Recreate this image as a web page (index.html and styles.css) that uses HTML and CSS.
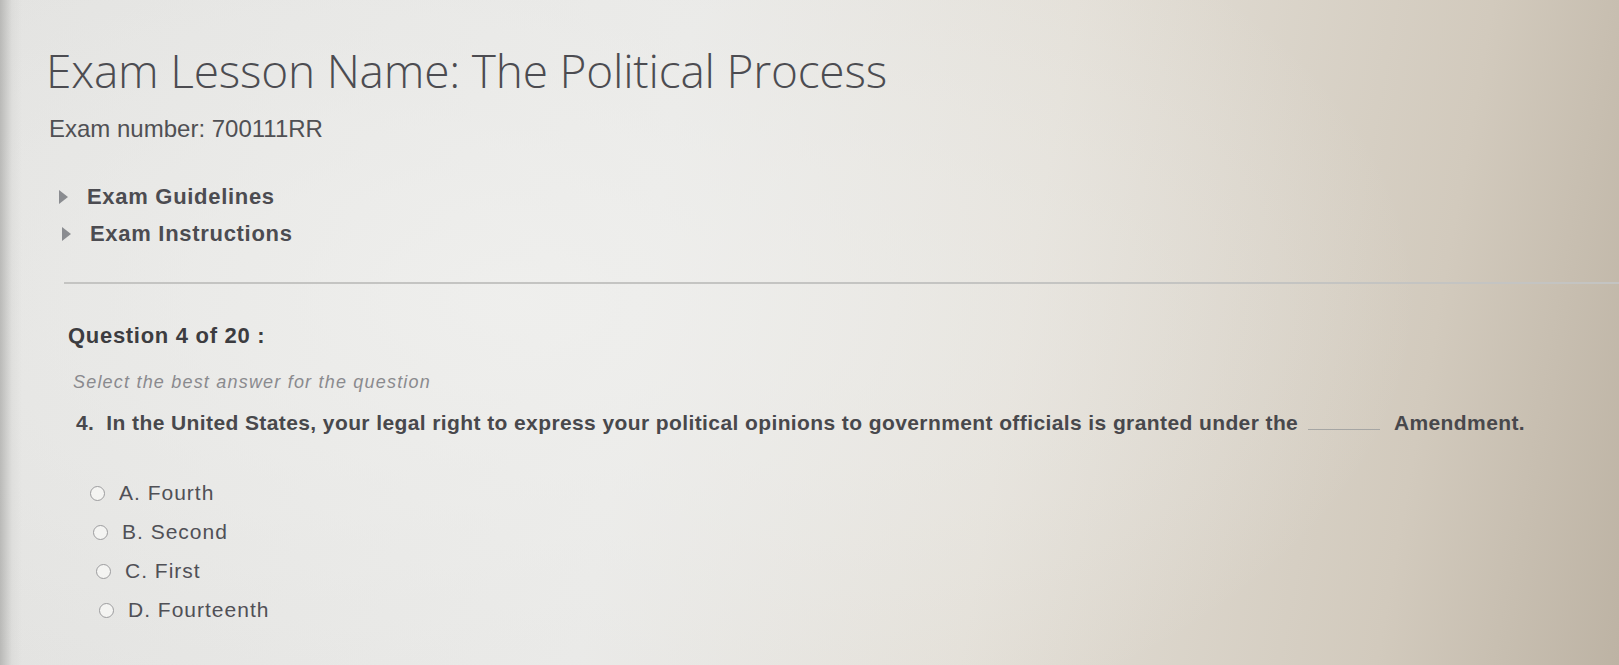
FILE: index.html
```html
<!DOCTYPE html>
<html lang="en">
<head>
<meta charset="utf-8">
<title>Exam Lesson Name: The Political Process</title>
<link rel="stylesheet" href="styles.css">
</head>
<body>
<div class="screen">
  <main class="page">
    <h1 class="title">Exam Lesson Name: The Political Process</h1>
    <p class="exam-number">Exam number: 700111RR</p>
    <ul class="toggles">
      <li class="toggle"><span class="tri"></span>Exam Guidelines</li>
      <li class="toggle toggle-2"><span class="tri"></span>Exam Instructions</li>
    </ul>
    <hr class="divider">
    <section class="question">
      <h2 class="q-head">Question 4 of 20 :</h2>
      <p class="hint">Select the best answer for the question</p>
      <p class="q-text"><span class="q-num">4.</span>In the United States, your legal right to express your political opinions to government officials is granted under the <span class="blank"></span> Amendment.</p>
      <ul class="options">
        <li class="opt opt-a"><span class="radio"></span>A. Fourth</li>
        <li class="opt opt-b"><span class="radio"></span>B. Second</li>
        <li class="opt opt-c"><span class="radio"></span>C. First</li>
        <li class="opt opt-d"><span class="radio"></span>D. Fourteenth</li>
      </ul>
    </section>
  </main>
</div>
</body>
</html>
```

FILE: styles.css
```css
html, body {
  margin: 0;
  padding: 0;
  width: 1619px;
  height: 665px;
  overflow: hidden;
}
body {
  font-family: "Liberation Sans", Arial, sans-serif;
  color: #4a4a4c;
}
.screen {
  width: 1619px;
  height: 665px;
  background:
    linear-gradient(90deg, rgba(150,150,148,0.55) 0px, rgba(200,200,198,0.25) 12px, rgba(0,0,0,0) 22px),
    radial-gradient(ellipse 900px 500px at 520px 300px, rgba(240,240,238,0.85), rgba(240,240,238,0) 100%),
    linear-gradient(100deg, #e1e1df 0%, #e8e8e6 40%, #e3dfd7 62%, #d2cabd 86%, #bdb3a4 100%);
  box-sizing: border-box;
  padding: 42px 0 0 46px;
}
.page {
  display: flex;
  flex-direction: column;
}
.title {
  margin: 0;
  font-family: "Open Sans", "Liberation Sans", sans-serif;
  font-weight: 300;
  font-size: 46px;
  line-height: 56px;
  color: #4c4c51;
  letter-spacing: -0.2px;
}
.exam-number {
  margin: 17px 0 0 3px;
  font-size: 24px;
  line-height: 28px;
  color: #505054;
  letter-spacing: 0;
}
.toggles {
  list-style: none;
  margin: 41px 0 0 13px;
  padding: 0;
}
.toggle {
  display: flex;
  align-items: center;
  font-weight: bold;
  font-size: 22px;
  line-height: 26px;
  color: #4c4c51;
  letter-spacing: 0.7px;
}
.toggle-2 {
  margin-top: 11px;
  margin-left: 3px;
}
.tri {
  width: 0;
  height: 0;
  border-top: 7px solid transparent;
  border-bottom: 7px solid transparent;
  border-left: 9px solid #8a8c90;
  margin-right: 19px;
}
.divider {
  margin: 35px 0 0 18px;
  border: 0;
  height: 2px;
  background: #c4c4c2;
}
.question {
  display: flex;
  flex-direction: column;
  padding-left: 22px;
}
.q-head {
  margin: 39px 0 0 0;
  font-size: 22px;
  line-height: 26px;
  font-weight: bold;
  color: #3c3c40;
  letter-spacing: 0.7px;
}
.hint {
  margin: 22px 0 0 5px;
  font-style: italic;
  font-size: 18px;
  line-height: 22px;
  color: #8a8a8e;
  letter-spacing: 1.2px;
}
.q-text {
  margin: 17px 0 0 8px;
  font-weight: bold;
  font-size: 21px;
  line-height: 26px;
  color: #48484c;
  letter-spacing: 0.4px;
}
.q-num {
  margin-right: 12px;
}
.blank {
  display: inline-block;
  width: 72px;
  border-bottom: 1px solid #a6a6a4;
  margin: 0 8px 0 4px;
}
.options {
  list-style: none;
  margin: 44px 0 0 22px;
  padding: 0;
  display: flex;
  flex-direction: column;
  gap: 13px;
}
.opt {
  display: flex;
  align-items: center;
  font-size: 21px;
  line-height: 26px;
  color: #505056;
  letter-spacing: 1px;
}
.opt-b { margin-left: 3px; }
.opt-c { margin-left: 6px; }
.opt-d { margin-left: 9px; }
.radio {
  width: 13px;
  height: 13px;
  border-radius: 50%;
  border: 1.5px solid #9c9c9e;
  background: #f4f4f2;
  margin-right: 14px;
}
```
